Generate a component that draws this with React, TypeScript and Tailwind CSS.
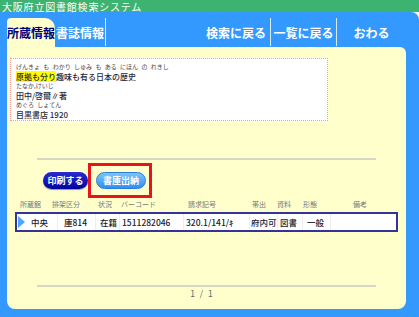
import React from 'react';

const FONT = "font-['Noto_Sans_CJK_JP','Noto_Sans',sans-serif]";

const App: React.FC = () => {
  return (
    <div className={`w-[419px] h-[317px] bg-white overflow-hidden ${FONT}`}>
      {/* title */}
      <div className="h-[12px] bg-[#3cb371] flex items-center pl-[2px]">
        <span className="text-white text-[10px] leading-[11px] whitespace-nowrap tracking-[0.8px]">大阪府立図書館検索システム</span>
      </div>

      {/* blue frame */}
      <div className="h-[305px] bg-[#3399ff] rounded-tr-[8px] pl-[7px] pt-[6px] flex flex-col">
        {/* tabs */}
        <div className="flex h-[29px] w-[399px] text-[12px] font-bold leading-none">
          <div className="w-[48px] bg-[#ffffcc] rounded-tl-[4px] rounded-tr-[10px] flex items-center justify-center text-[#000080]">
            所蔵情報
          </div>
          <div className="w-[50px] flex items-center justify-center text-white">書誌情報</div>
          <div className="w-[1px] bg-white/80 mb-[1px]" />
          <div className="w-[96px]" />
          <div className="w-[68px] flex items-center justify-center text-white">検索に戻る</div>
          <div className="w-[1px] bg-white/80 mb-[1px]" />
          <div className="w-[65px] flex items-center justify-center text-white">一覧に戻る</div>
          <div className="w-[1px] bg-white/80 mb-[1px]" />
          <div className="w-[69px] flex items-center justify-center text-white">おわる</div>
        </div>

        {/* content */}
        <div className="w-[399px] h-[262px] bg-[#ffffcc] rounded-tr-[6px] rounded-b-[8px] flex flex-col">
          {/* bibliographic box */}
          <div className="mt-[11px] ml-[3px] w-[318px] h-[63px] bg-white border border-dotted border-[#ff9999] pl-[5px] pt-[4px] text-[#1f2a3a]">
            <div className="h-[8px] text-[6px] leading-[8px] whitespace-pre text-[#444] [word-spacing:2px]">げんきょ も わかり しゅみ も ある にほん の れきし</div>
            <div className="h-[11px] text-[8px] leading-[11px] font-medium whitespace-nowrap">
              <span className="bg-[#ffff00]">原拠も分り</span>趣味も有る日本の歴史
            </div>
            <div className="h-[8px] text-[6px] leading-[8px] whitespace-pre text-[#444]">たなか,けいじ</div>
            <div className="h-[11px] text-[8px] leading-[11px] font-medium whitespace-nowrap">田中/啓爾∥著</div>
            <div className="h-[8px] text-[6px] leading-[8px] whitespace-pre text-[#444] [word-spacing:2px]">めぐろ しょてん</div>
            <div className="h-[11px] text-[8px] leading-[11px] font-medium whitespace-nowrap">目黒書店 1920</div>
          </div>

          <div className="mt-[37px] ml-[30px] w-[339px] h-[2px] bg-[#d6d6c6]" />

          {/* buttons */}
          <div className="mt-[3px] ml-[36px] flex items-center">
            <button className="w-[45px] h-[17px] rounded-full bg-gradient-to-b from-[#2a2ad0] to-[#0000a0] text-white text-[9px] font-bold leading-none shadow-[0_1px_1px_rgba(0,0,0,0.4)]">
              印刷する
            </button>
            <div className="w-[64px] h-[35px] border-[3px] border-[#e8141c] flex items-center pl-[5px]">
              <button className="w-[50px] h-[17px] rounded-full bg-gradient-to-b from-[#7cc4ff] to-[#2f8fef] border border-[#2a7fd8] text-white text-[9px] font-bold leading-none">
                書庫出納
              </button>
            </div>
          </div>

          {/* header row */}
          <div className="ml-[13px] flex h-[12px] items-center text-[7px] leading-none text-[#777] whitespace-nowrap">
            <div className="w-[32px]">所蔵館</div>
            <div className="w-[46px]">排架区分</div>
            <div className="w-[23px]">状況</div>
            <div className="w-[67px]">バーコード</div>
            <div className="w-[64px]">請求記号</div>
            <div className="w-[25px]">帯出</div>
            <div className="w-[26px]">資料</div>
            <div className="w-[50px]">形態</div>
            <div>備考</div>
          </div>

          {/* data row */}
          <div className="mt-[2px] ml-[8px] w-[383px] h-[20px] border-2 border-[#333399] bg-white flex items-stretch text-[8.5px] leading-none font-medium text-[#1a1a2a] whitespace-nowrap">
            <div className="w-[10px] flex items-center pl-[1px]">
              <svg width="7" height="12" viewBox="0 0 7 12">
                <polygon points="0,0 7,6 0,12" fill="#4da6ff" />
              </svg>
            </div>
            <div className="w-[31px] flex items-center pl-[4px] border-r border-[#eeeeee]">中央</div>
            <div className="w-[38px] flex items-center pl-[6px] border-r border-[#eeeeee]">庫814</div>
            <div className="w-[24px] flex items-center pl-[4px] border-r border-[#eeeeee]">在籍</div>
            <div className="w-[64px] flex items-center pl-[2px] border-r border-[#eeeeee]">1511282046</div>
            <div className="w-[66px] flex items-center pl-[2px] border-r border-[#eeeeee]">320.1/141/ｷ</div>
            <div className="w-[28px] flex items-center pl-[1px] border-r border-[#eeeeee]">府内可</div>
            <div className="w-[25px] flex items-center pl-[2px] border-r border-[#eeeeee]">図書</div>
            <div className="w-[28px] flex items-center pl-[4px] border-r border-[#eeeeee]">一般</div>
            <div className="flex-1" />
          </div>

          <div className="mt-[53px] ml-[30px] w-[339px] h-[2px] bg-[#d6d6c6]" />
          <div className="ml-[30px] w-[339px] pr-[10px] h-[12px] flex items-center justify-center text-[8.5px] leading-none text-[#666] whitespace-pre [word-spacing:3px]">
            1 / 1
          </div>
        </div>
      </div>
    </div>
  );
};

export default App;
